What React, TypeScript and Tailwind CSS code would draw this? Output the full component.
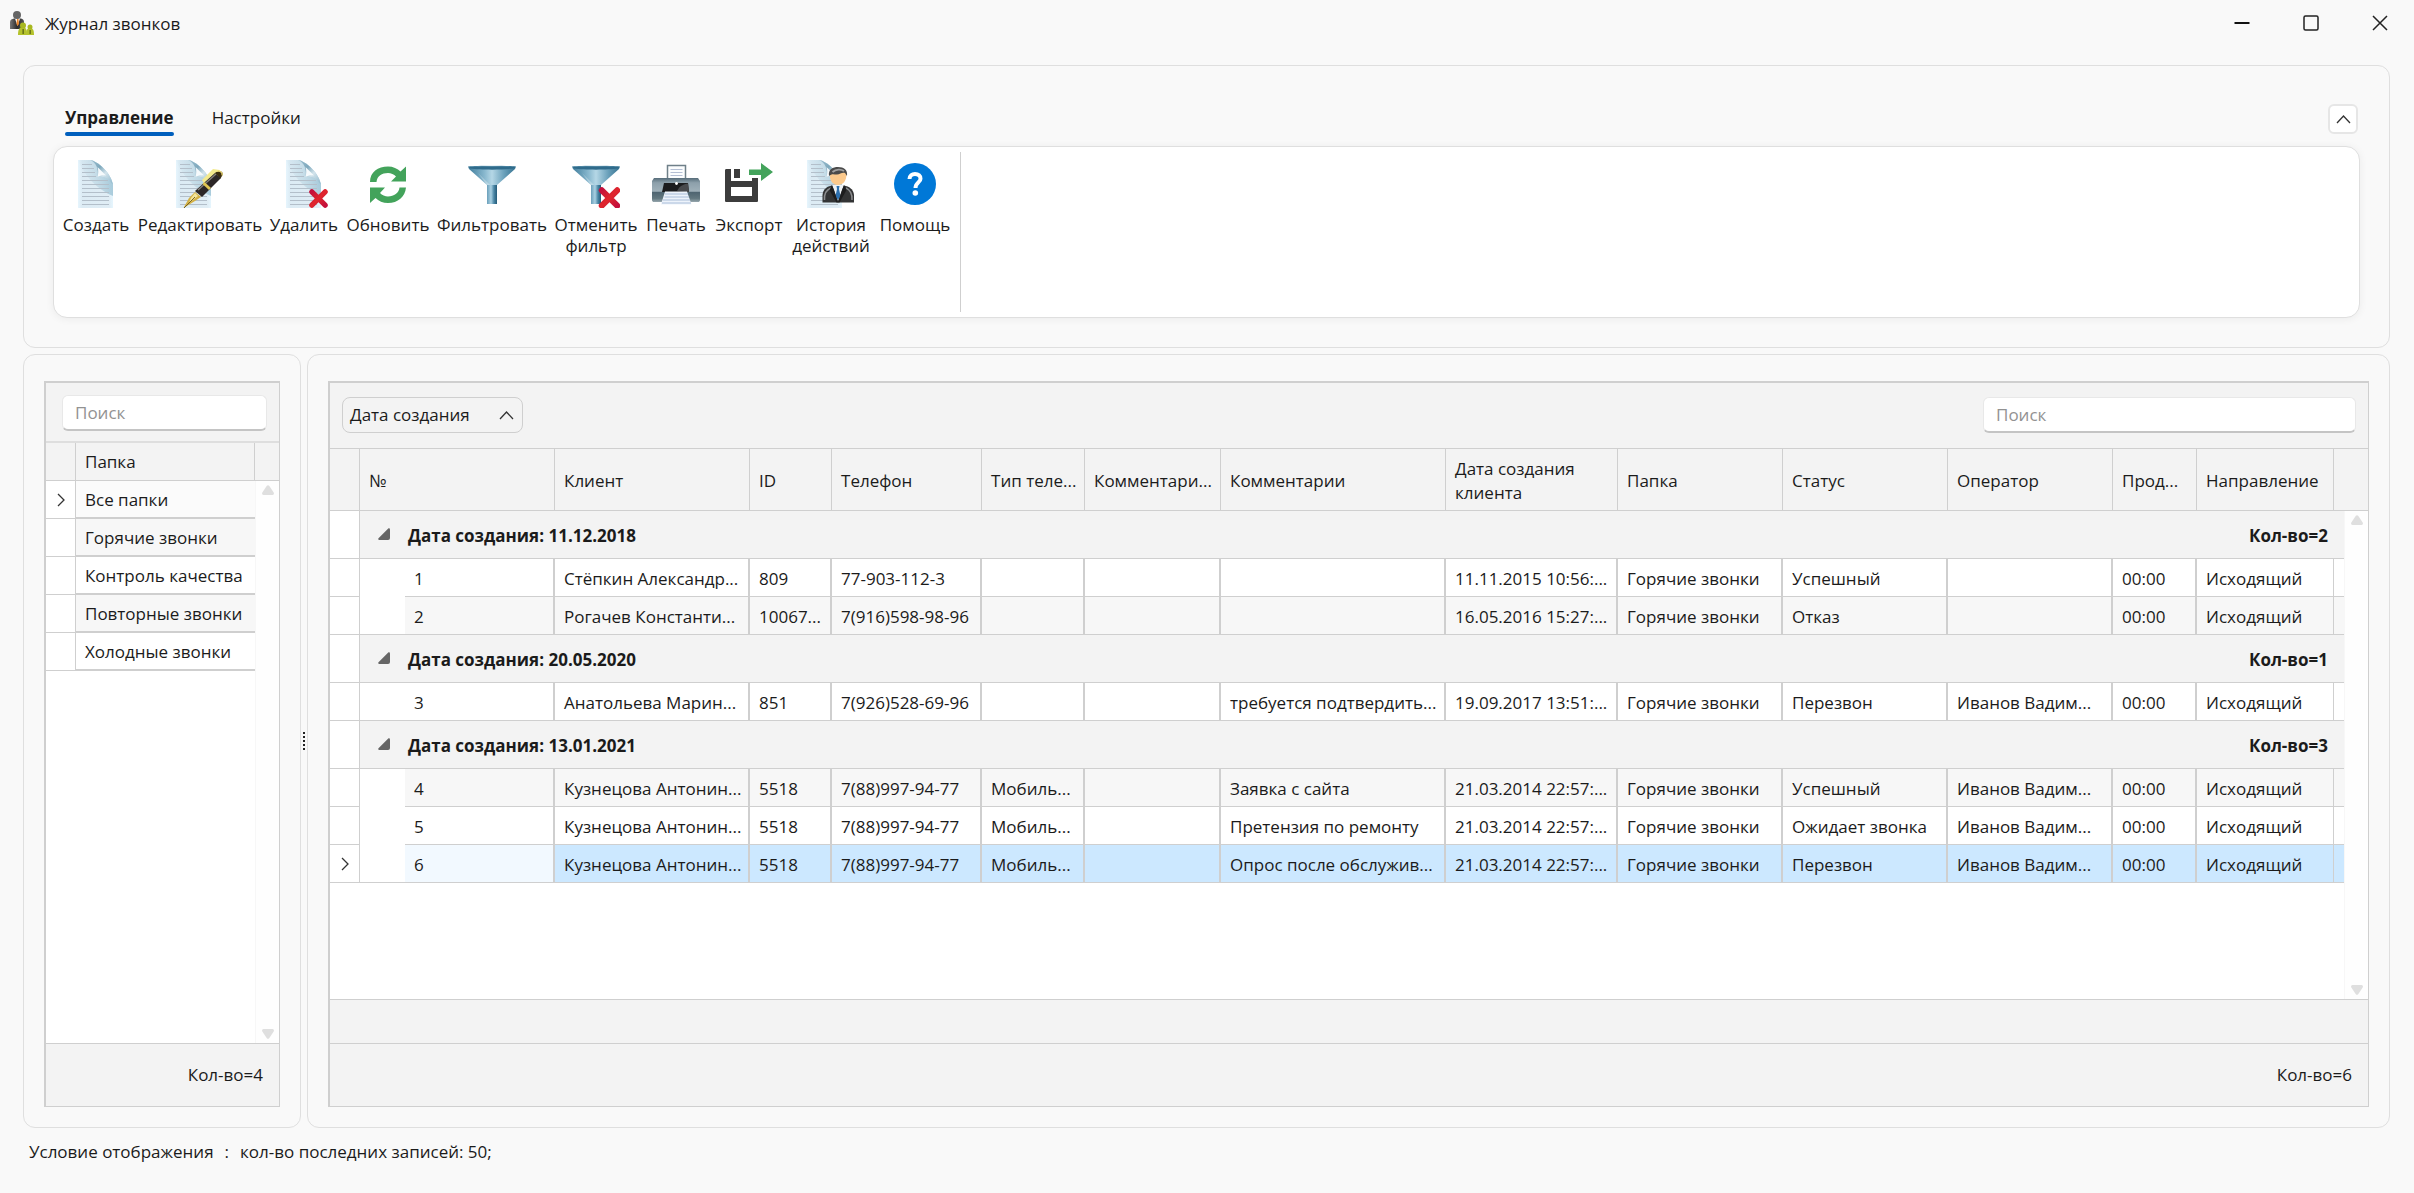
import React from "react";
import clsx from "clsx";

const DocShape: React.FC = () => (
  <g>
    <path d="M0 0H12C20 1 33 13 35 25V48H0Z" fill="url(#paper)" />
    <path d="M0 0H12C20 1 33 13 35 25V36C20 30 6 16 0 0Z" fill="url(#paperShade)" />
    <path d="M12 0C18 2 21 9 19.500 17C25 15 31 18 35 25C33 13 20 1 12 0Z" fill="url(#curl)" />
    <path d="M19.500 17C20.500 13 20.500 10 19.500 7L28 15.500C25 15 22 15.500 19.500 17Z" fill="#f6fafc" />
    <path
      d="M4 4.500H14M4 8.500H16M4 12.500H17M4 16.500H18M4 20.500H30M4 24.500H31M4 28.500H31M4 32.500H31M4 36.500H31M4 40.500H31M4 44.500H31"
      stroke="#b3bfca"
      strokeWidth="1.200"
    />
  </g>
);

const Cross: React.FC = () => (
  <path d="M3 3L17 17M17 3L3 17" stroke="url(#cross)" strokeWidth="5.5" strokeLinecap="round" />
);

const FunnelShape: React.FC = () => (
  <g>
    <path d="M0 6.500C8 5.500 40 5.500 48 6.500L47 9L29 25V44H19V25L1 9Z" fill="url(#funnel)" />
    <path d="M19 25H29V44H19Z" fill="url(#neck)" />
    <path d="M1 7C10 6 38 6 47 7L46 8.500C36 10 12 10 2 8.500Z" fill="#2f6b8b" />
    <path d="M19 25L10 13L22 25Z" fill="#fff" opacity="0.3" />
  </g>
);

const SharedGradients: React.FC = () => (
  <svg className="absolute size-0" aria-hidden="true">
    <defs>
      <linearGradient id="paper" x1="0" y1="0" x2="1" y2="0">
        <stop offset="0" stopColor="#e6f5fd" />
        <stop offset="0.12" stopColor="#dcebf4" />
        <stop offset="0.9" stopColor="#e0edf5" />
        <stop offset="1" stopColor="#e6f6fe" />
      </linearGradient>
      <linearGradient id="paperShade" x1="0" y1="0.3" x2="0.9" y2="0.2">
        <stop offset="0" stopColor="#b9d5e2" stopOpacity="0" />
        <stop offset="0.5" stopColor="#b9d5e2" stopOpacity="0.6" />
        <stop offset="1" stopColor="#9cc3d5" stopOpacity="0.8" />
      </linearGradient>
      <linearGradient id="curl" x1="0" y1="0" x2="1" y2="1">
        <stop offset="0" stopColor="#9dc0d0" />
        <stop offset="0.35" stopColor="#7ea8bc" />
        <stop offset="0.6" stopColor="#d3e4ec" />
        <stop offset="1" stopColor="#8cb6ca" />
      </linearGradient>
      <linearGradient id="cross" x1="0" y1="0" x2="1" y2="1">
        <stop offset="0" stopColor="#c4103c" />
        <stop offset="0.5" stopColor="#e0262c" />
        <stop offset="1" stopColor="#c4103c" />
      </linearGradient>
      <linearGradient id="funnel" x1="0" y1="0" x2="1" y2="0">
        <stop offset="0" stopColor="#3f7c9b" />
        <stop offset="0.35" stopColor="#8ab9cf" />
        <stop offset="0.5" stopColor="#b5d7e6" />
        <stop offset="0.75" stopColor="#6ba1bb" />
        <stop offset="1" stopColor="#34718f" />
      </linearGradient>
      <linearGradient id="neck" x1="0" y1="0" x2="1" y2="0">
        <stop offset="0" stopColor="#6a9fba" />
        <stop offset="0.4" stopColor="#a9d0e2" />
        <stop offset="0.7" stopColor="#4a86a5" />
        <stop offset="1" stopColor="#245a78" />
      </linearGradient>
      <linearGradient id="printer" x1="0" y1="0" x2="0" y2="1">
        <stop offset="0" stopColor="#566c79" />
        <stop offset="0.2" stopColor="#8da0ab" />
        <stop offset="0.55" stopColor="#9fb0b9" />
        <stop offset="0.6" stopColor="#4f6571" />
        <stop offset="0.85" stopColor="#62777f" />
        <stop offset="1" stopColor="#97a7ae" />
      </linearGradient>
      <linearGradient id="suit" x1="0" y1="0" x2="1" y2="0">
        <stop offset="0" stopColor="#777" />
        <stop offset="0.5" stopColor="#2b2b2b" />
        <stop offset="1" stopColor="#555" />
      </linearGradient>
    </defs>
  </svg>
);

const icons: Record<string, React.ReactNode> = {
  create: (
    <g transform="translate(6 0)">
      <DocShape />
    </g>
  ),
  edit: (
    <g>
      <DocShape />
      <path d="M26 20L37 9L44 10L42 14L29 25Z" fill="#f3ea8e" />
      <path d="M19 31L39 13L45 18L26 37Z" fill="#2b2626" />
      <path d="M22 30L40 14" stroke="#85807c" strokeWidth="1.300" />
      <path d="M39 13C42 10 48 11 46.500 15L44.500 18.500Z" fill="#3a2d10" />
      <path d="M41 11.500C44 10.500 47 12.500 46 15.500" stroke="#e8d471" strokeWidth="1.300" fill="none" />
      <path d="M27.500 23L34 29" stroke="#e0c552" strokeWidth="3" />
      <path d="M19 32L25 37L19 41L7.500 48L13 38Z" fill="#d3b145" />
      <path d="M15 38L19 33L22 36L13 43Z" fill="#f3e59a" />
      <path d="M8 48L19 37" stroke="#6b571d" strokeWidth="0.900" />
    </g>
  ),
  remove: (
    <g>
      <g transform="translate(6 0)">
        <DocShape />
      </g>
      <g transform="translate(29 29) scale(0.95)">
        <Cross />
      </g>
    </g>
  ),
  refresh: (
    <g fill="#43a35b">
      <path d="M6 22C6 12 14 6.500 24 6.500C29 6.500 33.500 8.500 36.500 11.500L42 6.500V21.500H27L32 16.500C30 14.500 27 13 24 13C18 13 13 16 12.500 22Z" />
      <path d="M42 27.500C41 37 34 43 24 43C19 43 14.500 41 11.500 38L6 43V27.500H21L16 33C18 35 21 36.500 24 36.500C30 36.500 35 33 35.500 27.500Z" />
    </g>
  ),
  filter: <FunnelShape />,
  unfilter: (
    <g>
      <FunnelShape />
      <g transform="translate(26.500 27) scale(1.1)">
        <Cross />
      </g>
    </g>
  ),
  print: (
    <g>
      <rect x="15.500" y="5.500" width="18" height="14" fill="#fbfdfe" stroke="#6f8089" strokeWidth="1.500" />
      <path d="M18.500 9.500H30.500M18.500 12.500H30.500M18.500 15.500H30.500" stroke="#b4bfd4" strokeWidth="1.200" />
      <path d="M2 18H46L48 21V40C48 41.500 47 42 46 42H2C1 42 0 41.500 0 40V21Z" fill="url(#printer)" />
      <path d="M12 23H36L37 32H10Z" fill="#1b1c1e" />
      <path d="M25 31C28 25 33 24 36 23.500L37 32Z" fill="#484a4d" />
      <circle cx="24.500" cy="23.500" r="1.400" fill="#fff" />
      <path d="M13 31.500H35L39.500 44.500H9Z" fill="#edf3fb" />
      <path d="M13 34H36M12.500 37H37M11 40H38M10 43H39" stroke="#a9bdd8" strokeWidth="1" />
    </g>
  ),
  exportFile: (
    <g>
      <path
        fillRule="evenodd"
        d="M1.500 9H6V21H27V18H33V40.500C33 41.500 32.500 42 31.500 42H1.500C.5 42 0 41.500 0 40.500V10.500C0 9.500.5 9 1.500 9ZM6 27V36H27V27Z"
        fill="#3c3c3c"
      />
      <rect x="9" y="9" width="6" height="9" fill="#3c3c3c" />
      <path d="M24 9.500H36V3L48 12L36 21V15H24Z" fill="#43a35b" />
    </g>
  ),
  history: (
    <g>
      <DocShape />
      <path d="M15.500 42.500V35C16 29 20 26.500 25 25.500H37C42 26.500 46.500 29 47 35V42.500Z" fill="#333435" />
      <path d="M17.500 40C17 33 20 29.500 24 28M45 40C45.500 33 43 30 39 28" stroke="#8b8c8e" strokeWidth="1.500" fill="none" />
      <path d="M25 25L31 41L37 25Z" fill="#eef2f5" />
      <path d="M29.500 26H32.500L32 29L33.500 36L31 40L28.500 36L30 29Z" fill="#2c6fae" />
      <path d="M25 25L22.500 30L29.500 42.500H31L27 30ZM37 25L39.500 30L32.500 42.500H31L35 30Z" fill="#1d1d1e" />
      <path d="M23 14C22.500 21 26 25 31 25C36 25 39.500 21 39.500 14L37 10H25Z" fill="#fbc98c" />
      <path d="M22 16C21 9 26 7 31 7C37 7 41 10 40 16L38 13C35 12 33 14.500 30 14.500C27 14.500 25 13 22 16Z" fill="#4a4a4a" />
      <path d="M25.500 12C29 9 34 9 37 11" stroke="#a0a0a0" strokeWidth="1.800" fill="none" />
    </g>
  ),
  help: (
    <g>
      <circle cx="24" cy="24" r="21" fill="#0078d7" />
      <path
        d="M18.500 19C18.500 15.500 21 14 24 14C27.500 14 29.500 16 29.500 18.700C29.500 22.500 24.500 22.500 24.500 28"
        stroke="#fff"
        strokeWidth="4"
        fill="none"
      />
      <circle cx="24.300" cy="33" r="2.800" fill="#fff" />
    </g>
  ),
};

const actions = [
  { icon: "create", label: "Создать", width: "w-[76px]" },
  { icon: "edit", label: "Редактировать", width: "w-[132px]" },
  { icon: "remove", label: "Удалить", width: "w-[76px]" },
  { icon: "refresh", label: "Обновить", width: "w-[92px]" },
  { icon: "filter", label: "Фильтровать", width: "w-[116px]" },
  { icon: "unfilter", label: "Отменить фильтр", width: "w-[92px]" },
  { icon: "print", label: "Печать", width: "w-[68px]" },
  { icon: "exportFile", label: "Экспорт", width: "w-[78px]" },
  { icon: "history", label: "История действий", width: "w-[86px]" },
  { icon: "help", label: "Помощь", width: "w-[82px]" },
];

const folders = [
  "Все папки",
  "Горячие звонки",
  "Контроль качества",
  "Повторные звонки",
  "Холодные звонки",
];

const columns = [
  { title: "Клиент", width: "w-[195px]" },
  { title: "ID", width: "w-[82px]" },
  { title: "Телефон", width: "w-[150px]" },
  { title: "Тип теле...", width: "w-[103px]" },
  { title: "Комментари...", width: "w-[136px]" },
  { title: "Комментарии", width: "w-[225px]" },
  { title: "Дата создания клиента", width: "w-[172px]", wrap: true },
  { title: "Папка", width: "w-[165px]" },
  { title: "Статус", width: "w-[165px]" },
  { title: "Оператор", width: "w-[165px]" },
  { title: "Прод...", width: "w-[84px]" },
  { title: "Направление", width: "w-[137px]" },
];

const groups = [
  {
    date: "11.12.2018",
    rows: [
      ["1", "Стёпкин Александр...", "809", "77-903-112-3", "", "", "", "11.11.2015 10:56:...", "Горячие звонки", "Успешный", "", "00:00", "Исходящий"],
      ["2", "Рогачев Константи...", "10067...", "7(916)598-98-96", "", "", "", "16.05.2016 15:27:...", "Горячие звонки", "Отказ", "", "00:00", "Исходящий"],
    ],
  },
  {
    date: "20.05.2020",
    rows: [
      ["3", "Анатольева Марин...", "851", "7(926)528-69-96", "", "", "требуется подтвердить...", "19.09.2017 13:51:...", "Горячие звонки", "Перезвон", "Иванов Вадим...", "00:00", "Исходящий"],
    ],
  },
  {
    date: "13.01.2021",
    rows: [
      ["4", "Кузнецова Антонин...", "5518", "7(88)997-94-77", "Мобиль...", "", "Заявка с сайта", "21.03.2014 22:57:...", "Горячие звонки", "Успешный", "Иванов Вадим...", "00:00", "Исходящий"],
      ["5", "Кузнецова Антонин...", "5518", "7(88)997-94-77", "Мобиль...", "", "Претензия по ремонту", "21.03.2014 22:57:...", "Горячие звонки", "Ожидает звонка", "Иванов Вадим...", "00:00", "Исходящий"],
      ["6", "Кузнецова Антонин...", "5518", "7(88)997-94-77", "Мобиль...", "", "Опрос после обслужив...", "21.03.2014 22:57:...", "Горячие звонки", "Перезвон", "Иванов Вадим...", "00:00", "Исходящий"],
    ],
  },
];

const SELECTED = "6";

const RowArrow: React.FC = () => (
  <svg className="mx-auto" width="8" height="14" viewBox="0 0 8 14" fill="none" stroke="#333" strokeWidth="1.300">
    <path d="M1 1L7 7L1 13" />
  </svg>
);

const ChevronUp: React.FC = () => (
  <svg width="15" height="9" viewBox="0 0 15 9" fill="none" stroke="#333" strokeWidth="1.300">
    <path d="M1 8L7.500 1L14 8" />
  </svg>
);

const ScrollBar: React.FC<{ headerHeight: string }> = ({ headerHeight }) => (
  <div className="flex w-6 shrink-0 flex-col">
    <div className={clsx("shrink-0 border-b border-[#cfcfcf] bg-[#f3f3f3]", headerHeight)} />
    <div className="flex flex-1 flex-col items-center justify-between border-l border-[#f7f7f7] bg-[#fefefe] py-1">
      <svg width="12" height="10" viewBox="0 0 12 10" fill="#dfdfdf">
        <path d="M4.800 .8Q6 -.5 7.200 .8L12 8Q12 10 10.500 10H1.500Q0 10 0 8Z" />
      </svg>
      <svg width="12" height="10" viewBox="0 0 12 10" fill="#dfdfdf">
        <path d="M4.800 9.200Q6 10.500 7.200 9.200L12 2Q12 0 10.500 0H1.500Q0 0 0 2Z" />
      </svg>
    </div>
  </div>
);

const searchBox =
  "h-9 rounded-md border border-[#e8e8e8] border-b-2 border-b-[#c4c4c4] bg-white px-3 outline-none placeholder:text-[#929292]";

const TitleBar: React.FC = () => (
  <header className="flex h-12 items-center pl-2">
    <svg width="28" height="28" viewBox="0 0 28 28">
      <path d="M2 18V12C2 9.500 4 9 6 8.500H13C15 9 16 10 16 12V19H2Z" fill="url(#suit)" />
      <path d="M7 8.500H12L9.500 16Z" fill="#fff" />
      <path d="M9 9H10.500L11 14L9.500 16L8.500 14Z" fill="#e8842a" />
      <circle cx="9" cy="5" r="4" fill="#666" />
      <path d="M10 25C10 20 11 17 15 17C18 17 19 20 19 25Z" fill="#b4c22c" />
      <circle cx="15" cy="15.500" r="3" fill="#a8b820" />
      <path d="M18 25C18 20 19 18 22 18C25 18 26 20 26 25Z" fill="#b4c22c" />
      <circle cx="22" cy="17" r="2.500" fill="#a8b820" />
      <path d="M14.500 19H15.800V24H14.500ZM21.500 20H22.800V24H21.500Z" fill="#5c6414" />
    </svg>
    <h1 className="ml-[9px] flex-1">Журнал звонков</h1>
    <div className="flex pb-0.5">
      <button type="button" aria-label="Свернуть" className="flex h-10 w-[69px] items-center justify-center">
        <svg width="16" height="16" viewBox="0 0 16 16">
          <path d="M.5 8H15.500" stroke="#111" strokeWidth="2" />
        </svg>
      </button>
      <button type="button" aria-label="Развернуть" className="flex h-10 w-[69px] items-center justify-center">
        <svg width="16" height="16" viewBox="0 0 16 16">
          <rect x="1" y="1" width="14" height="14" rx="1.500" fill="none" stroke="#222" strokeWidth="1.500" />
        </svg>
      </button>
      <button type="button" aria-label="Закрыть" className="flex h-10 w-[69px] items-center justify-center">
        <svg width="16" height="16" viewBox="0 0 16 16">
          <path d="M1 1L15 15M15 1L1 15" stroke="#222" strokeWidth="1.500" />
        </svg>
      </button>
    </div>
  </header>
);

const Ribbon: React.FC = () => (
  <section className="mt-[17px] rounded-xl border border-[#dfdfdf] px-[29px] pt-[38px] pb-[29px]">
    <div className="flex items-start justify-between pl-3">
      <nav className="flex gap-[38px]" role="tablist">
        <button type="button" role="tab" aria-selected="true" className="flex flex-col font-bold">
          <span className="leading-7">Управление</span>
          <span className="h-1 w-full rounded-full bg-[#005fbd]" />
        </button>
        <button type="button" role="tab" aria-selected="false" className="flex flex-col">
          <span className="leading-7">Настройки</span>
        </button>
      </nav>
      <button
        type="button"
        aria-label="Свернуть ленту"
        className="mr-0.5 flex size-[30px] items-center justify-center rounded-md border-2 border-[#e6e6e6] bg-white"
      >
        <ChevronUp />
      </button>
    </div>
    <div className="mt-[10px] flex h-[172px] rounded-[14px] border border-[#dfdfdf] bg-white py-[5px] pl-1 shadow-[0_1px_8px_rgba(0,0,0,0.06)]">
      <div className="flex items-start border-r border-[#cfcfcf] pt-2 pr-1">
        {actions.map((action) => (
          <button
            key={action.icon}
            type="button"
            className={clsx("flex flex-col items-center text-center leading-[21px]", action.width)}
          >
            <svg className="mb-[6px]" width="48" height="48" viewBox="0 0 48 48">
              {icons[action.icon]}
            </svg>
            <span>{action.label}</span>
          </button>
        ))}
      </div>
    </div>
  </section>
);

const FolderPanel: React.FC = () => (
  <section className="flex w-[278px] shrink-0 flex-col rounded-xl border border-[#dfdfdf] p-5 pt-[26px]">
    <div className="flex flex-1 flex-col border-t-2 border-r border-b border-l-2 border-[#cfcfcf] bg-white">
      <div className="flex border-b-2 border-[#dedede] bg-[#f3f3f3] pt-3 pr-3 pb-[10px] pl-4">
        <input type="search" aria-label="Поиск папки" placeholder="Поиск" className={clsx(searchBox, "min-w-0 flex-1")} />
      </div>
      <div className="flex flex-1">
        <div className="flex-1">
          <table className="w-full table-fixed border-separate border-spacing-0">
            <colgroup>
              <col className="w-[30px]" />
              <col />
            </colgroup>
            <thead>
              <tr className="h-[38px] bg-[#f3f3f3]">
                <th className="border-r border-b border-[#cfcfcf]" />
                <th className="border-r border-b border-[#cfcfcf] px-[9px] text-left font-normal">Папка</th>
              </tr>
            </thead>
            <tbody>
              {folders.map((name, i) => (
                <tr key={name} className="h-[38px]">
                  <td className="border-r border-b border-[#cfcfcf]">{i === 0 && <RowArrow />}</td>
                  <td
                    className={clsx(
                      "border-b-2 border-[#cfcfcf] px-[9px] pt-0.5 whitespace-nowrap",
                      i === 0 && "bg-[#fbfbfb]",
                      i % 2 === 1 && "bg-[#f7f7f7]"
                    )}
                  >
                    {name}
                  </td>
                </tr>
              ))}
            </tbody>
          </table>
        </div>
        <ScrollBar headerHeight="h-[38px]" />
      </div>
      <div className="flex h-[63px] items-center justify-end border-t border-[#cfcfcf] bg-[#f3f3f3] pr-4">Кол-во=4</div>
    </div>
  </section>
);

const CallsTable: React.FC = () => (
  <table className="w-full table-fixed border-separate border-spacing-0">
    <colgroup>
      <col className="w-[30px]" />
      <col className="w-[45px]" />
      <col className="w-[150px]" />
      {columns.map((column) => (
        <col key={column.title} className={column.width} />
      ))}
      <col className="w-[10px]" />
    </colgroup>
    <thead>
      <tr className="h-[62px] bg-[#f3f3f3] text-left">
        <th className="border-r border-b border-[#cfcfcf]" />
        <th colSpan={2} className="border-r border-b border-[#cfcfcf] px-[9px] pt-0.5 font-normal">
          №
        </th>
        {columns.map((column) => (
          <th
            key={column.title}
            className={clsx(
              "border-r border-b border-[#cfcfcf] px-[9px] pt-0.5 font-normal",
              !column.wrap && "whitespace-nowrap"
            )}
          >
            {column.title}
          </th>
        ))}
        <th className="border-b border-[#cfcfcf]" />
      </tr>
    </thead>
    {groups.map((group) => (
      <tbody key={group.date}>
        <tr className="h-12 bg-[#f3f3f3] font-bold">
          <td className="border-r border-b border-[#cfcfcf] bg-white" />
          <td colSpan={12} className="border-b border-[#cfcfcf] pt-0.5 pl-[18px]">
            <span className="flex items-center gap-[18px]">
              <svg className="mb-1" width="12" height="12" viewBox="0 0 12 12" fill="#666">
                <path d="M10.500 .3Q12 0 12 1.500V10Q12 12 10 12H1Q-.3 11.500 .5 10.300Z" />
              </svg>
              Дата создания: {group.date}
            </span>
          </td>
          <td colSpan={3} className="border-b border-[#cfcfcf] pt-0.5 pr-4 text-right">
            Кол-во={group.rows.length}
          </td>
        </tr>
        {group.rows.map((row, r) => {
          const selected = row[0] === SELECTED;
          const striped = Number(row[0]) % 2 === 0;
          return (
            <tr key={row[0]} className="h-[38px]">
              <td className="border-r border-b border-[#cfcfcf]">{selected && <RowArrow />}</td>
              <td className={clsx("border-[#cfcfcf]", r === group.rows.length - 1 && "border-b")} />
              {row.map((cell, c) => (
                <td
                  key={c}
                  className={clsx(
                    "border-b border-[#cfcfcf] px-[9px] pt-0.5 whitespace-nowrap",
                    c === row.length - 1 ? "border-r" : "border-r-2",
                    selected && (c === 0 ? "bg-[#f2f9ff]" : "bg-[#cce8ff]"),
                    !selected && striped && "bg-[#f7f7f7]"
                  )}
                >
                  {cell}
                </td>
              ))}
              <td
                className={clsx(
                  "border-b border-[#cfcfcf]",
                  selected && "bg-[#cce8ff]",
                  !selected && striped && "bg-[#f7f7f7]"
                )}
              />
            </tr>
          );
        })}
      </tbody>
    ))}
  </table>
);

const CallsPanel: React.FC = () => (
  <section className="flex min-w-0 flex-1 flex-col rounded-xl border border-[#dfdfdf] p-5 pt-[26px]">
    <div className="flex flex-1 flex-col border-t-2 border-r border-b border-l-2 border-[#cfcfcf] bg-white">
      <div className="flex h-[66px] items-start justify-between border-b border-[#cfcfcf] bg-[#f3f3f3] pt-[14px] pr-3 pl-3">
        <button
          type="button"
          className="flex h-9 w-[181px] items-center justify-between rounded-lg border border-[#cfcfcf] pr-2 pl-[7px]"
        >
          Дата создания
          <ChevronUp />
        </button>
        <input type="search" aria-label="Поиск звонка" placeholder="Поиск" className={clsx(searchBox, "w-[373px]")} />
      </div>
      <div className="flex flex-1">
        <div className="min-w-0 flex-1">
          <CallsTable />
        </div>
        <ScrollBar headerHeight="h-[62px]" />
      </div>
      <div className="h-11 border-t border-[#cfcfcf] bg-[#f3f3f3]" />
      <div className="flex h-[63px] items-center justify-end border-t border-[#cfcfcf] bg-[#f3f3f3] pr-4">Кол-во=6</div>
    </div>
  </section>
);

const App: React.FC = () => {
  return (
    <div className="flex min-h-screen flex-col bg-[#f9f9f9] font-['Open_Sans','Noto_Sans',sans-serif] text-[17px] leading-6 text-[#1b1b1b]">
      <SharedGradients />
      <TitleBar />
      <main className="flex flex-1 flex-col pr-6 pl-[23px]">
        <Ribbon />
        <div className="mt-[6px] flex flex-1">
          <FolderPanel />
          <div className="flex w-[6px] shrink-0 flex-col items-center justify-center gap-0.5" role="separator">
            {[0, 1, 2, 3, 4].map((dot) => (
              <span key={dot} className="size-0.5 bg-[#222]" />
            ))}
          </div>
          <CallsPanel />
        </div>
      </main>
      <footer className="flex h-[65px] items-start gap-[11px] px-[29px] pt-3">
        <span>Условие отображения</span>
        <span>:</span>
        <span>кол-во последних записей: 50;</span>
      </footer>
    </div>
  );
};

export default App;
